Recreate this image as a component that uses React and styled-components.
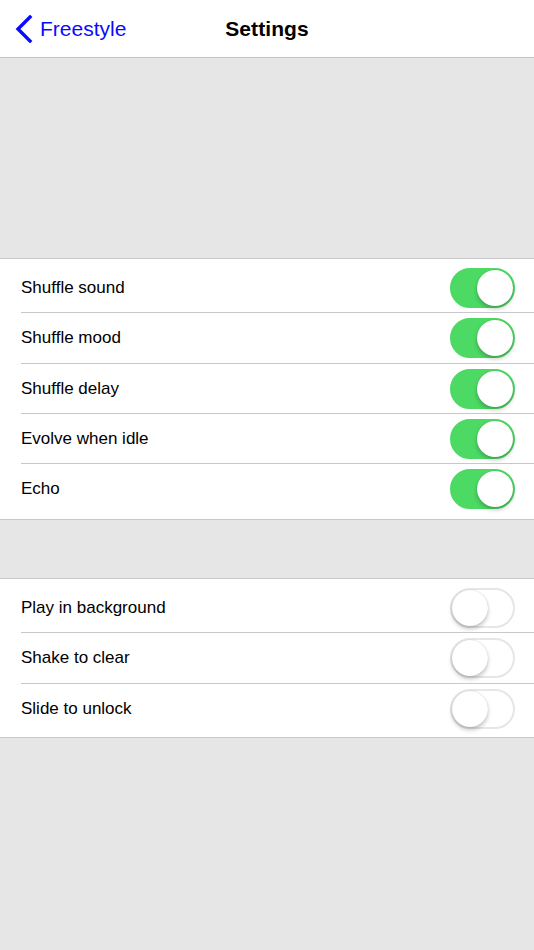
import React from "react";
import styled, { createGlobalStyle } from "styled-components";

const Global = createGlobalStyle`
  html, body { margin: 0; padding: 0; background: #e6e6e6; }
  body { font-family: "Liberation Sans", Arial, Helvetica, sans-serif; -webkit-font-smoothing: antialiased; }
`;

const Page = styled.div`
  width: 534px;
  min-height: 950px;
  background: #e6e6e6;
  display: flex;
  flex-direction: column;
`;

const NavBar = styled.header`
  height: 57px;
  background: #fff;
  border-bottom: 1px solid #c4c4c4;
  display: grid;
  grid-template-columns: 1fr auto 1fr;
  align-items: center;
`;

const Back = styled.div`
  display: flex;
  align-items: center;
  gap: 7px;
  padding-left: 15px;
  color: #0a0aff;
  font-size: 21px;
`;

const Title = styled.div`
  font-size: 21px;
  font-weight: 700;
  color: #000;
  letter-spacing: 0.1px;
`;

const Spacer = styled.div`
  height: ${p => p.$h}px;
`;

const Group = styled.section`
  background: #fff;
  border-top: 1px solid #c8c7cc;
  border-bottom: 1px solid #c8c7cc;
  padding: 4px 0 ${p => p.$pb}px;
`;

const Row = styled.div`
  height: 50.25px;
  display: flex;
  align-items: center;
  justify-content: space-between;
  padding: 0 19px 0 21px;
  position: relative;
  &:not(:last-child)::after {
    content: "";
    position: absolute;
    left: 21px;
    right: 0;
    bottom: 0;
    height: 1px;
    background: #c8c7cc;
  }
`;

const Label = styled.span`
  font-size: 17px;
  color: #000;
`;

const Track = styled.div`
  width: 65px;
  height: 40px;
  box-sizing: border-box;
  border-radius: 20px;
  position: relative;
  background: ${p => (p.$on ? "#4cd964" : "#fff")};
  border: 2px solid ${p => (p.$on ? "#4cd964" : "#e6e6e6")};
`;

const Knob = styled.div`
  position: absolute;
  top: 0;
  ${p => (p.$on ? "right: 0;" : "left: 0;")}
  width: 36px;
  height: 36px;
  border-radius: 50%;
  background: #fff;
  box-shadow: 0 3px 4px rgba(0, 0, 0, 0.22), 0 0 1px rgba(0, 0, 0, 0.25);
`;

const Toggle = ({ on }) => (
  <Track $on={on}>
    <Knob $on={on} />
  </Track>
);

const group1 = ["Shuffle sound", "Shuffle mood", "Shuffle delay", "Evolve when idle", "Echo"];
const group2 = ["Play in background", "Shake to clear", "Slide to unlock"];

export default function App() {
  return (
    <Page>
      <Global />
      <NavBar>
        <Back>
          <svg width="18" height="28" viewBox="0 0 18 28">
            <path d="M15 2 L3 14 L15 26" fill="none" stroke="#0a0aff" strokeWidth="3.4" strokeLinecap="square" />
          </svg>
          <span>Freestyle</span>
        </Back>
        <Title>Settings</Title>
        <div />
      </NavBar>
      <Spacer $h={200} />
      <Group $pb={4.75}>
        {group1.map(t => (
          <Row key={t}>
            <Label>{t}</Label>
            <Toggle on />
          </Row>
        ))}
      </Group>
      <Spacer $h={58} />
      <Group $pb={3.25}>
        {group2.map(t => (
          <Row key={t}>
            <Label>{t}</Label>
            <Toggle on={false} />
          </Row>
        ))}
      </Group>
    </Page>
  );
}
